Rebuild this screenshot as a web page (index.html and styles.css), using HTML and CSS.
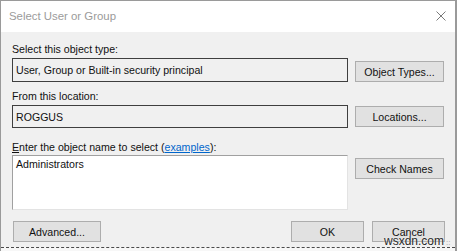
FILE: index.html
```html
<!DOCTYPE html>
<html lang="en">
<head>
    <meta charset="UTF-8">
    <title>Select User or Group</title>
    <link rel="stylesheet" href="styles.css">
</head>
<body>
    <div class="dialog">
        <div class="titlebar">
            <span class="title">Select User or Group</span>
            <svg class="close" width="10" height="10" viewBox="0 0 10 10">
                <path d="M0.5 0.5 L9.5 9.5 M9.5 0.5 L0.5 9.5" stroke="#7a7a7a" stroke-width="1" fill="none"/>
            </svg>
        </div>

        <div class="content">
            <div class="label">Select this object type:</div>
            <div class="row">
                <div class="field readonly">User, Group or Built-in security principal</div>
                <button class="btn">Object Types...</button>
            </div>

            <div class="label second">From this location:</div>
            <div class="row short">
                <div class="field readonly">ROGGUS</div>
                <button class="btn">Locations...</button>
            </div>

            <div class="label third"><u>E</u>nter the object name to select (<a href="#">examples</a>):</div>
            <div class="row names">
                <div class="field area">Administrators</div>
                <button class="btn">Check Names</button>
            </div>

            <div class="footer">
                <button class="btn advanced">Advanced...</button>
                <div class="actions">
                    <button class="btn ok">OK</button>
                    <button class="btn cancel">Cancel</button>
                </div>
            </div>
        </div>

        <div class="behind"></div>

        <div class="watermark">wsxdn.com<span class="dots">::</span></div>
    </div>
</body>
</html>
```

FILE: styles.css
```css
body {
    margin: 0;
    font-family: 'Liberation Sans', Arial, sans-serif;
    background-color: #ffffff;
}

.dialog {
    position: relative;
    width: 457px;
    height: 251px;
    box-sizing: border-box;
    border-left: 1px solid #9a9a9a;
    border-right: 2px solid #9a9a9a;
    border-top: 1px solid #9a9a9a;
    overflow: hidden;
}

.titlebar {
    height: 30px;
    background-color: #ffffff;
    display: flex;
    align-items: center;
    justify-content: space-between;
    padding: 0 9px 1px 8px;
}

.title {
    font-size: 11.4px;
    color: #9b9b9b;
}

.close {
    margin-right: 0;
}

.content {
    background-color: #f0f0f0;
    height: 215px;
    box-sizing: border-box;
    padding: 10px 10px 0 11px;
    font-size: 10.6px;
    color: #111;
}

.label {
    line-height: 14px;
    height: 14px;
}

.label.second {
    margin-top: 7px;
}

.label.third {
    margin-top: 12px;
}

.label a {
    color: #0066cc;
}

.row {
    display: flex;
    align-items: flex-end;
    gap: 7px;
    margin-top: 2px;
    height: 24px;
}

.row.short {
    height: 23px;
    align-items: center;
}

.row.names {
    margin-top: 1px;
    height: 55px;
    align-items: flex-start;
}

.field {
    width: 336px;
    height: 100%;
    box-sizing: border-box;
    padding: 0 3px;
    display: flex;
    align-items: center;
}

.field.readonly {
    border: 1px solid #3f3f3f;
    background-color: #f0f0f0;
}

.field.area {
    align-items: flex-start;
    padding-top: 2px;
    background-color: #ffffff;
    border-top: 1px solid #a0a0a0;
    border-left: 1px solid #a0a0a0;
    border-right: 1px solid #e3e3e3;
    border-bottom: 1px solid #e3e3e3;
}

.btn {
    height: 21px;
    width: 89px;
    box-sizing: border-box;
    background-color: #e1e1e1;
    border: 1px solid #adadad;
    font-family: 'Liberation Sans', Arial, sans-serif;
    font-size: 10.6px;
    color: #111;
    padding: 0;
    border-radius: 0;
}

.row.names .btn {
    margin-top: 3px;
}

.footer {
    display: flex;
    justify-content: space-between;
    margin-top: 11px;
}

.btn.advanced {
    width: 88px;
    margin-left: 1px;
}

.actions {
    display: flex;
    gap: 8px;
}

.btn.ok,
.btn.cancel {
    width: 73px;
}

.behind {
    height: 5px;
    background-color: #f7f7f7;
    border-top: 1px dashed #4a4a4a;
}

.watermark {
    position: absolute;
    left: 383px;
    top: 234px;
    font-size: 12px;
    line-height: 12px;
    color: #2a2a2a;
    text-shadow: 0 0 2px #ffffff;
}

.dots {
    font-size: 8px;
    color: #9a9a9a;
    margin-left: 2px;
}
```
